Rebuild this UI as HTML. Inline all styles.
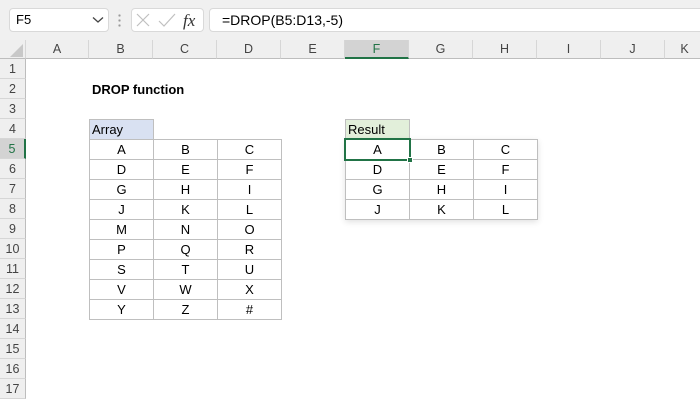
<!DOCTYPE html>
<html><head><style>
*{margin:0;padding:0;box-sizing:border-box}
body{width:700px;height:400px;overflow:hidden;background:#fff;font-family:"Liberation Sans",Calibri,sans-serif;position:relative}
.a{position:absolute}
.ch{position:absolute;top:40px;height:19px;background:#efefef;border-right:1px solid #d6d6d6;border-bottom:1px solid #bdbdbd;font-size:12.5px;color:#444;text-align:center;line-height:19px}
.rh{position:absolute;left:0;width:26px;height:20px;background:#efefef;border-bottom:1px solid #d6d6d6;border-right:1px solid #bdbdbd;font-size:12.5px;color:#444;text-align:center;line-height:20px}
table{position:absolute;border-collapse:collapse}
td{width:64px;height:20px;border:1px solid #bfbfbf;text-align:center;font-size:13px;color:#000;padding:0;line-height:18px}
</style></head><body>
<div class="a" style="left:0;top:0;width:700px;height:40px;background:#f0f0f0"></div>
<div class="a" style="left:9px;top:8px;width:100px;height:24px;background:#fff;border:1px solid #d9d9d9;border-radius:4px;font-size:13px;line-height:22px;padding-left:6px">F5</div>
<svg class="a" style="left:92px;top:16px" width="12" height="8"><path d="M1 1.5 L6 6 L11 1.5" stroke="#444" stroke-width="1.3" fill="none"/></svg>
<div class="a" style="left:118px;top:13px;width:3px;height:14px;background:radial-gradient(circle,#999 1px,transparent 1.3px) 0 0/3px 5px"></div>
<div class="a" style="left:131px;top:8px;width:73px;height:24px;background:#fff;border:1px solid #d9d9d9;border-radius:4px"></div>
<svg class="a" style="left:131px;top:8px" width="73" height="24"><path d="M6 6 L18 18 M18 6 L6 18" stroke="#c0c0c0" stroke-width="1.2"/><path d="M28 13 L33 18 L44 6" stroke="#c0c0c0" stroke-width="1.2" fill="none"/><text x="52" y="18" font-family="Liberation Serif" font-style="italic" font-size="17" fill="#333">fx</text></svg>
<div class="a" style="left:209px;top:8px;width:495px;height:24px;background:#fff;border:1px solid #d9d9d9;border-radius:4px;font-size:14px;line-height:22px;padding-left:12px">=DROP(B5:D13,-5)</div>
<div class="ch" style="left:0;width:26px"><svg width="18" height="16" style="position:absolute;left:7px;top:2px"><path d="M16 2 L16 15 L3 15 Z" fill="#c8c8c8"/></svg></div>
<div class="ch" style="left:26px;width:63px">A</div>
<div class="ch" style="left:89px;width:64px">B</div>
<div class="ch" style="left:153px;width:64px">C</div>
<div class="ch" style="left:217px;width:64px">D</div>
<div class="ch" style="left:281px;width:64px">E</div>
<div class="ch" style="left:345px;width:64px;background:#d3d3d3;border-bottom:2px solid #217346;color:#217346">F</div>
<div class="ch" style="left:409px;width:64px">G</div>
<div class="ch" style="left:473px;width:64px">H</div>
<div class="ch" style="left:537px;width:64px">I</div>
<div class="ch" style="left:601px;width:64px">J</div>
<div class="ch" style="left:665px;width:40px">K</div>
<div class="rh" style="top:59px">1</div><div class="rh" style="top:79px">2</div><div class="rh" style="top:99px">3</div><div class="rh" style="top:119px">4</div>
<div class="rh" style="top:139px;background:#d3d3d3;border-right:2px solid #217346;color:#217346">5</div>
<div class="rh" style="top:159px">6</div><div class="rh" style="top:179px">7</div><div class="rh" style="top:199px">8</div><div class="rh" style="top:219px">9</div><div class="rh" style="top:239px">10</div><div class="rh" style="top:259px">11</div><div class="rh" style="top:279px">12</div><div class="rh" style="top:299px">13</div><div class="rh" style="top:319px">14</div><div class="rh" style="top:339px">15</div><div class="rh" style="top:359px">16</div><div class="rh" style="top:379px">17</div>
<div class="a" style="left:92px;top:81px;font-size:13px;font-weight:bold;line-height:18px">DROP function</div>
<div class="a" style="left:89px;top:119px;width:65px;height:21px;background:#d9e1f2;border:1px solid #bfbfbf;font-size:13px;line-height:19px;padding-left:2px">Array</div>
<table style="left:89px;top:139px">
<tr><td>A</td><td>B</td><td>C</td></tr><tr><td>D</td><td>E</td><td>F</td></tr><tr><td>G</td><td>H</td><td>I</td></tr><tr><td>J</td><td>K</td><td>L</td></tr><tr><td>M</td><td>N</td><td>O</td></tr><tr><td>P</td><td>Q</td><td>R</td></tr><tr><td>S</td><td>T</td><td>U</td></tr><tr><td>V</td><td>W</td><td>X</td></tr><tr><td>Y</td><td>Z</td><td>#</td></tr>
</table>
<div class="a" style="left:345px;top:119px;width:65px;height:21px;background:#e2efda;border:1px solid #bfbfbf;font-size:13px;line-height:19px;padding-left:2px">Result</div>
<table style="left:345px;top:139px;border:1.5px solid #3b64b0;box-shadow:0 2px 6px rgba(0,0,0,0.12)">
<tr><td>A</td><td>B</td><td>C</td></tr><tr><td>D</td><td>E</td><td>F</td></tr><tr><td>G</td><td>H</td><td>I</td></tr><tr><td>J</td><td>K</td><td>L</td></tr>
</table>
<div class="a" style="left:344px;top:138px;width:67px;height:23px;border:2px solid #217346"></div>
<div class="a" style="left:407px;top:157px;width:6px;height:6px;background:#217346;border:1px solid #fff"></div>
</body></html>
